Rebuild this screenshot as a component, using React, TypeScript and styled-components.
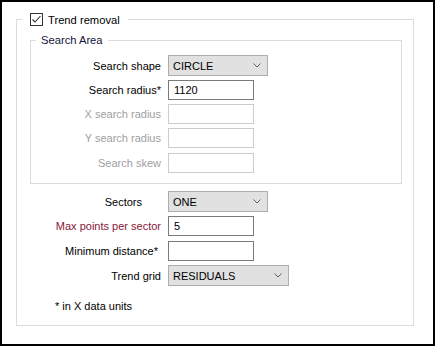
import React from "react";
import styled, { createGlobalStyle } from "styled-components";

const GlobalStyle = createGlobalStyle`
  html, body { margin: 0; padding: 0; background: #ffffff; }
  body { font-family: "Liberation Sans", Arial, sans-serif; font-size: 11px; color: #000; }
  * { box-sizing: border-box; }
`;

const Frame = styled.div`
  width: 435px;
  height: 346px;
  border: 2px solid #000;
  background: #fff;
  padding: 17px 0 0 14px;
`;

const OuterGroup = styled.div`
  position: relative;
  width: 398px;
  height: 307px;
  border: 1px solid #dcdcdc;
  padding: 20px 0 0 13px;
`;

const OuterLegend = styled.div`
  position: absolute;
  top: -7px;
  left: 5px;
  height: 13px;
  padding: 0 8px;
  background: #fff;
  display: flex;
  align-items: center;
  gap: 5px;
`;

const CheckBox = styled.span`
  width: 13px;
  height: 13px;
  border: 1px solid #333;
  background: #fff;
  display: flex;
  align-items: center;
  justify-content: center;
`;

const LegendText = styled.span`
  font-size: 11.2px;
  line-height: 14px;
  color: #000;
  white-space: nowrap;
`;

const InnerGroup = styled.div`
  position: relative;
  width: 372px;
  height: 144px;
  border: 1px solid #dcdcdc;
  padding-top: 14px;
`;

const InnerLegend = styled.div`
  position: absolute;
  top: -8px;
  left: 5px;
  padding: 0 5px;
  background: #fff;
  font-size: 11.2px;
  line-height: 14px;
  color: #14143a;
  white-space: nowrap;
`;

const Row = styled.div<{ $labelW: number; $mt?: number }>`
  display: grid;
  grid-template-columns: ${(p) => p.$labelW}px auto;
  column-gap: 7px;
  align-items: center;
  justify-content: start;
  margin-top: ${(p) => p.$mt ?? 4}px;
`;

const Label = styled.span<{ $tone?: "normal" | "disabled" | "warn"; $pr?: number }>`
  text-align: right;
  font-size: 11px;
  line-height: 14px;
  white-space: nowrap;
  padding-right: ${(p) => p.$pr ?? 0}px;
  color: ${(p) =>
    p.$tone === "disabled" ? "#a0a0a0" : p.$tone === "warn" ? "#861737" : "#000"};
`;

const Combo = styled.div<{ $w: number }>`
  width: ${(p) => p.$w}px;
  height: 21px;
  background: #e1e1e1;
  border: 1px solid #adadad;
  display: flex;
  align-items: center;
  justify-content: space-between;
  padding: 0 6px 0 4px;
  font-size: 11px;
  color: #000;
`;

const TextBox = styled.div<{ $disabled?: boolean }>`
  width: 86px;
  height: 20px;
  background: #fff;
  border: 1px solid ${(p) => (p.$disabled ? "#cccccc" : "#7a7a7a")};
  display: flex;
  align-items: center;
  padding-left: 5px;
  font-size: 11px;
  color: #000;
`;

const Lower = styled.div`
  margin-top: 7px;
`;

const Footnote = styled.div`
  margin: 13px 0 0 25px;
  font-size: 11px;
  line-height: 14px;
  color: #000;
`;

const Chevron = () => (
  <svg width="8" height="5" viewBox="0 0 8 5">
    <polyline points="0.5,0.5 4,4 7.5,0.5" fill="none" stroke="#606060" strokeWidth="1" />
  </svg>
);

const Check = () => (
  <svg width="11" height="11" viewBox="0 0 11 11">
    <polyline points="1.5,5.5 4,8 9.5,2" fill="none" stroke="#333" strokeWidth="1.1" />
  </svg>
);

export default function App() {
  return (
    <>
      <GlobalStyle />
      <Frame>
        <OuterGroup>
          <OuterLegend>
            <CheckBox>
              <Check />
            </CheckBox>
            <LegendText>Trend removal</LegendText>
          </OuterLegend>

          <InnerGroup>
            <InnerLegend>Search Area</InnerLegend>
            <Row $labelW={130} $mt={0}>
              <Label>Search shape</Label>
              <Combo $w={100}>
                <span>CIRCLE</span>
                <Chevron />
              </Combo>
            </Row>
            <Row $labelW={130}>
              <Label>Search radius*</Label>
              <TextBox>1120</TextBox>
            </Row>
            <Row $labelW={130}>
              <Label $tone="disabled">X search radius</Label>
              <TextBox $disabled />
            </Row>
            <Row $labelW={130}>
              <Label $tone="disabled">Y search radius</Label>
              <TextBox $disabled />
            </Row>
            <Row $labelW={130} $mt={5}>
              <Label $tone="disabled">Search skew</Label>
              <TextBox $disabled />
            </Row>
          </InnerGroup>

          <Lower>
            <Row $labelW={131} $mt={4}>
              <Label $pr={19}>Sectors</Label>
              <Combo $w={100}>
                <span>ONE</span>
                <Chevron />
              </Combo>
            </Row>
            <Row $labelW={131}>
              <Label $tone="warn">Max points per sector</Label>
              <TextBox>5</TextBox>
            </Row>
            <Row $labelW={131} $mt={5}>
              <Label $pr={3}>Minimum distance*</Label>
              <TextBox />
            </Row>
            <Row $labelW={131}>
              <Label>Trend grid</Label>
              <Combo $w={121}>
                <span>RESIDUALS</span>
                <Chevron />
              </Combo>
            </Row>
            <Footnote>* in X data units</Footnote>
          </Lower>
        </OuterGroup>
      </Frame>
    </>
  );
}
